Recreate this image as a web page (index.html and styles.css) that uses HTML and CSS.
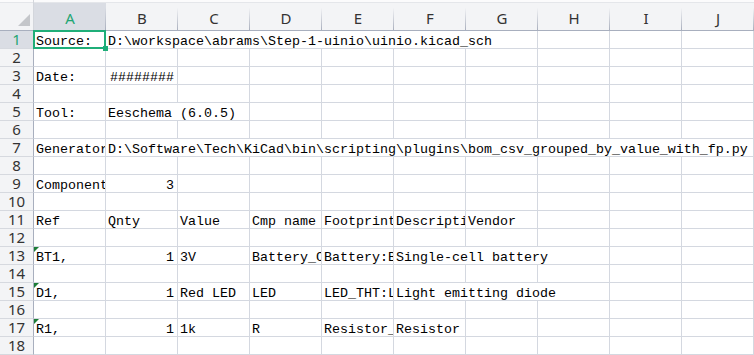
FILE: index.html
```html
<!DOCTYPE html>
<html lang="en">
<head>
    <meta charset="UTF-8">
    <title>uinio.csv</title>
    <link rel="stylesheet" href="styles.css">
</head>
<body>
    <div class="sheet">
        <!-- cabecera de columnas -->
        <div class="corner"><span class="tri"></span></div>
        <div class="col active">A</div>
        <div class="col">B</div>
        <div class="col">C</div>
        <div class="col">D</div>
        <div class="col">E</div>
        <div class="col">F</div>
        <div class="col">G</div>
        <div class="col">H</div>
        <div class="col">I</div>
        <div class="col">J</div>

        <!-- 1 -->
        <div class="rh active">1</div>
        <div class="c sel">Source:</div>
        <div class="c span6">D:\workspace\abrams\Step-1-uinio\uinio.kicad_sch</div>
        <div class="c"></div><div class="c"></div><div class="c"></div>

        <!-- 2 -->
        <div class="rh">2</div>
        <div class="c"></div><div class="c"></div><div class="c"></div><div class="c"></div><div class="c"></div>
        <div class="c"></div><div class="c"></div><div class="c"></div><div class="c"></div><div class="c"></div>

        <!-- 3 -->
        <div class="rh">3</div>
        <div class="c">Date:</div>
        <div class="c num">########</div>
        <div class="c"></div><div class="c"></div><div class="c"></div><div class="c"></div>
        <div class="c"></div><div class="c"></div><div class="c"></div><div class="c"></div>

        <!-- 4 -->
        <div class="rh">4</div>
        <div class="c"></div><div class="c"></div><div class="c"></div><div class="c"></div><div class="c"></div>
        <div class="c"></div><div class="c"></div><div class="c"></div><div class="c"></div><div class="c"></div>

        <!-- 5 -->
        <div class="rh">5</div>
        <div class="c">Tool:</div>
        <div class="c span2">Eeschema (6.0.5)</div>
        <div class="c"></div><div class="c"></div><div class="c"></div><div class="c"></div>
        <div class="c"></div><div class="c"></div><div class="c"></div>

        <!-- 6 -->
        <div class="rh">6</div>
        <div class="c"></div><div class="c"></div><div class="c"></div><div class="c"></div><div class="c"></div>
        <div class="c"></div><div class="c"></div><div class="c"></div><div class="c"></div><div class="c"></div>

        <!-- 7 -->
        <div class="rh">7</div>
        <div class="c">Generator</div>
        <div class="c span9">D:\Software\Tech\KiCad\bin\scripting\plugins\bom_csv_grouped_by_value_with_fp.py</div>

        <!-- 8 -->
        <div class="rh">8</div>
        <div class="c"></div><div class="c"></div><div class="c"></div><div class="c"></div><div class="c"></div>
        <div class="c"></div><div class="c"></div><div class="c"></div><div class="c"></div><div class="c"></div>

        <!-- 9 -->
        <div class="rh">9</div>
        <div class="c">Components</div>
        <div class="c num">3</div>
        <div class="c"></div><div class="c"></div><div class="c"></div><div class="c"></div>
        <div class="c"></div><div class="c"></div><div class="c"></div><div class="c"></div>

        <!-- 10 -->
        <div class="rh">10</div>
        <div class="c"></div><div class="c"></div><div class="c"></div><div class="c"></div><div class="c"></div>
        <div class="c"></div><div class="c"></div><div class="c"></div><div class="c"></div><div class="c"></div>

        <!-- 11 -->
        <div class="rh">11</div>
        <div class="c">Ref</div>
        <div class="c">Qnty</div>
        <div class="c">Value</div>
        <div class="c">Cmp name</div>
        <div class="c">Footprint</div>
        <div class="c">Description</div>
        <div class="c">Vendor</div>
        <div class="c"></div><div class="c"></div><div class="c"></div>

        <!-- 12 -->
        <div class="rh">12</div>
        <div class="c"></div><div class="c"></div><div class="c"></div><div class="c"></div><div class="c"></div>
        <div class="c"></div><div class="c"></div><div class="c"></div><div class="c"></div><div class="c"></div>

        <!-- 13 -->
        <div class="rh">13</div>
        <div class="c flagged"><span class="flag"></span>BT1,</div>
        <div class="c num">1</div>
        <div class="c">3V</div>
        <div class="c">Battery_Cell</div>
        <div class="c">Battery:BatteryHolder_Keystone_1058_1x2032</div>
        <div class="c span3">Single-cell battery</div>
        <div class="c"></div><div class="c"></div>

        <!-- 14 -->
        <div class="rh">14</div>
        <div class="c"></div><div class="c"></div><div class="c"></div><div class="c"></div><div class="c"></div>
        <div class="c"></div><div class="c"></div><div class="c"></div><div class="c"></div><div class="c"></div>

        <!-- 15 -->
        <div class="rh">15</div>
        <div class="c flagged"><span class="flag"></span>D1,</div>
        <div class="c num">1</div>
        <div class="c">Red LED</div>
        <div class="c">LED</div>
        <div class="c">LED_THT:LED_D5.0mm</div>
        <div class="c span3">Light emitting diode</div>
        <div class="c"></div><div class="c"></div>

        <!-- 16 -->
        <div class="rh">16</div>
        <div class="c"></div><div class="c"></div><div class="c"></div><div class="c"></div><div class="c"></div>
        <div class="c"></div><div class="c"></div><div class="c"></div><div class="c"></div><div class="c"></div>

        <!-- 17 -->
        <div class="rh">17</div>
        <div class="c flagged"><span class="flag"></span>R1,</div>
        <div class="c num">1</div>
        <div class="c">1k</div>
        <div class="c">R</div>
        <div class="c">Resistor_THT:R_Axial_DIN0207</div>
        <div class="c">Resistor</div>
        <div class="c"></div><div class="c"></div><div class="c"></div><div class="c"></div>

        <!-- 18 -->
        <div class="rh">18</div>
        <div class="c"></div><div class="c"></div><div class="c"></div><div class="c"></div><div class="c"></div>
        <div class="c"></div><div class="c"></div><div class="c"></div><div class="c"></div><div class="c"></div>
    </div>
</body>
</html>
```

FILE: styles.css
```css
body {
    margin: 0;
    background: #ffffff;
    overflow: hidden;
}
.sheet {
    display: grid;
    grid-template-columns: 34px repeat(10, 72px);
    grid-template-rows: 31px;
    grid-auto-rows: 18px;
}
/* cabecera */
.corner,
.col {
    box-sizing: border-box;
    border-bottom: 1px solid #a8afbe;
    background:
        linear-gradient(to bottom, #fbfbfc 0, #fbfbfc 2px, #e4e6ea 2px, #e4e6ea 3px, transparent 3px),
        #f3f4f6;
}
.corner {
    display: flex;
    justify-content: flex-end;
    align-items: flex-end;
    padding: 0 3px 4px 0;
    border-right: 1px solid #d3d6dc;
}
.tri {
    width: 0;
    height: 0;
    border-left: 12px solid transparent;
    border-bottom: 12px solid #c4c6ca;
}
.col {
    display: flex;
    justify-content: center;
    align-items: center;
    padding-top: 6px;
    font-family: "Noto Sans", sans-serif;
    font-size: 15px;
    color: #333333;
    background:
        linear-gradient(to bottom, #fbfbfc 0, #fbfbfc 2px, #e4e6ea 2px, #e4e6ea 3px, transparent 3px),
        linear-gradient(to bottom, rgba(170, 176, 190, 0) 25%, #aab0be) right top / 1px 100% no-repeat,
        #f3f4f6;
}
.col.active {
    color: #1fa673;
    background:
        linear-gradient(to bottom, #fbfbfc 0, #fbfbfc 2px, #e4e6ea 2px, #e4e6ea 3px, transparent 3px),
        linear-gradient(to bottom, rgba(170, 176, 190, 0) 25%, #aab0be) right top / 1px 100% no-repeat,
        #dadde4;
}
.rh {
    box-sizing: border-box;
    display: flex;
    justify-content: center;
    align-items: center;
    background: #f3f4f6;
    border-right: 1px solid #a8afbe;
    border-bottom: 1px solid #d6d9df;
    font-family: "Noto Sans", sans-serif;
    font-size: 15px;
    line-height: 17px;
    color: #333333;
}
.rh.active {
    background: #dadde4;
    color: #1fa673;
}
/* celdas */
.c {
    box-sizing: border-box;
    border-right: 1px solid #d4d8e0;
    border-bottom: 1px solid #d4d8e0;
    padding: 3px 2px 0 2px;
    font-family: "Liberation Mono", "DejaVu Sans Mono", monospace;
    font-size: 13.33px;
    line-height: 15px;
    color: #000000;
    white-space: nowrap;
    overflow: hidden;
}
.num {
    text-align: right;
    padding-right: 3px;
}
.span2 { grid-column: span 2; }
.span3 { grid-column: span 3; }
.span6 { grid-column: span 6; }
.span9 { grid-column: span 9; }
.sel {
    position: relative;
    overflow: visible;
}
.sel::before {
    content: "";
    position: absolute;
    left: -1px;
    top: -1px;
    right: -1px;
    bottom: -1px;
    border: 2px solid #1fae78;
}
.sel::after {
    content: "";
    position: absolute;
    right: -3px;
    bottom: -3px;
    width: 5px;
    height: 5px;
    background: #1fae78;
}
.flagged {
    position: relative;
}
.flag {
    position: absolute;
    left: 0;
    top: 0;
    width: 0;
    height: 0;
    border-top: 5px solid #1c7d36;
    border-right: 5px solid transparent;
}
```
